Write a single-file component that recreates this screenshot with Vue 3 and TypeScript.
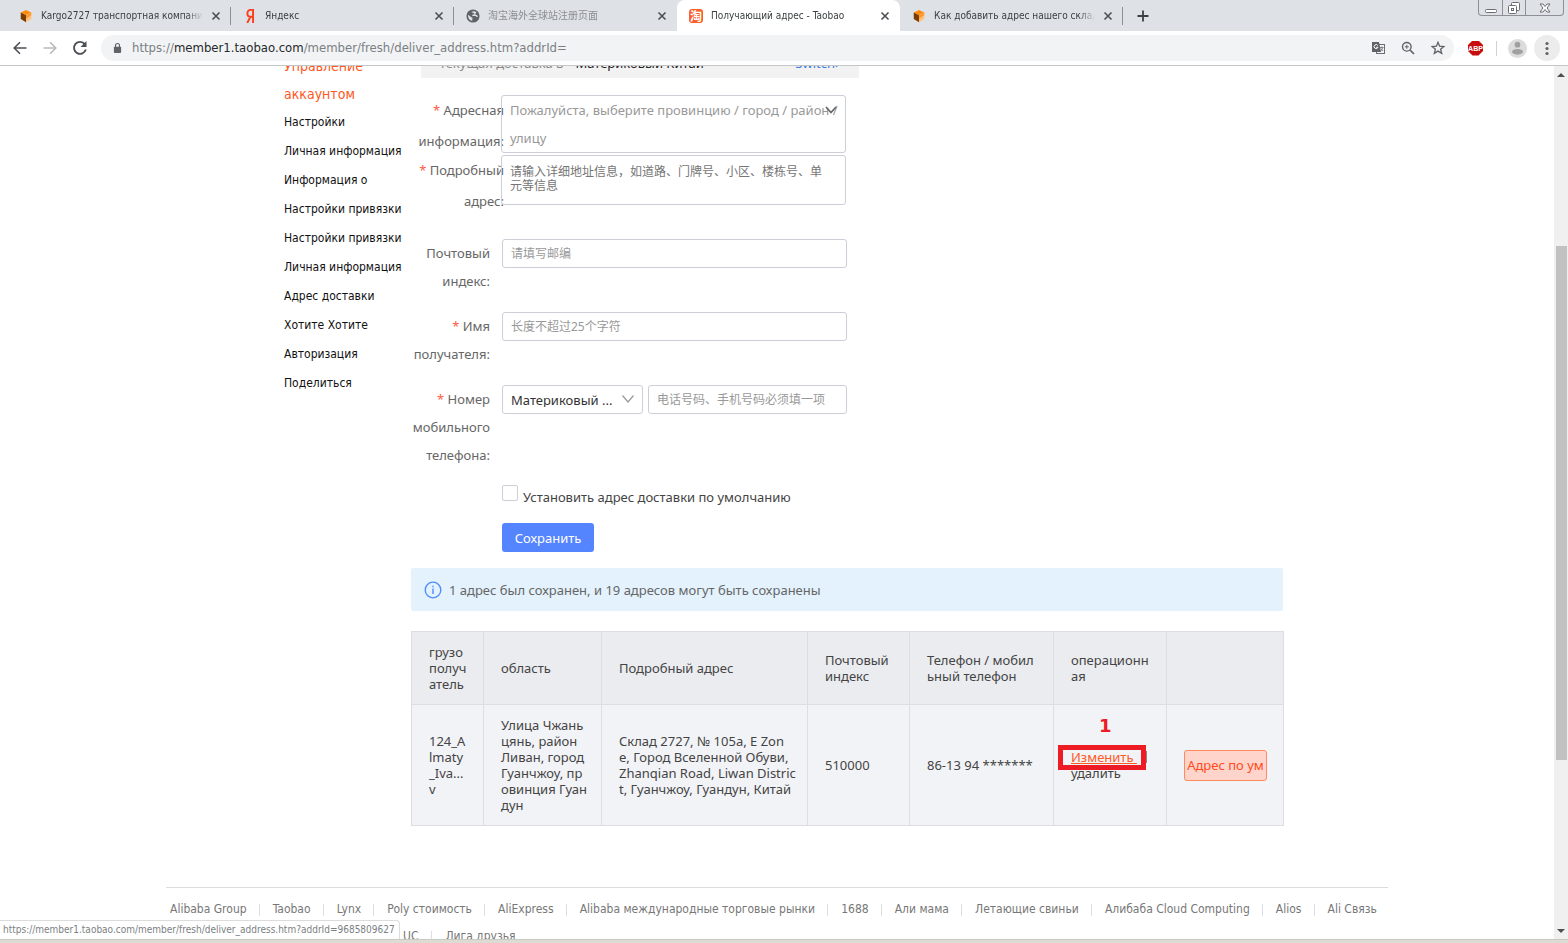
<script setup lang="ts">
import { ref } from 'vue'

interface Tab {
  title: string
  icon: 'box' | 'yandex' | 'globe' | 'taobao'
  active?: boolean
  muted?: boolean
}

const tabs: Tab[] = [
  { title: 'Kargo2727 транспортная компания', icon: 'box' },
  { title: 'Яндекс', icon: 'yandex' },
  { title: '淘宝海外全球站注册页面', icon: 'globe', muted: true },
  { title: 'Получающий адрес - Taobao', icon: 'taobao', active: true },
  { title: 'Как добавить адрес нашего склада', icon: 'box' },
]

const menu: string[] = [
  'Настройки',
  'Личная информация',
  'Информация о',
  'Настройки привязки',
  'Настройки привязки',
  'Личная информация',
  'Адрес доставки',
  'Хотите Хотите',
  'Авторизация',
  'Поделиться',
]

const columns: string[] = [
  'грузо\nполуч\nатель',
  'область',
  'Подробный адрес',
  'Почтовый\nиндекс',
  'Телефон / мобил\nьный телефон',
  'операционн\nая',
  '',
]

const cells: string[] = [
  '124_A\nlmaty\n_Iva...\nv',
  'Улица Чжань\nцянь, район\nЛиван, город\nГуанчжоу, пр\nовинция Гуан\nдун',
  'Склад 2727, № 105a, E Zon\ne, Город Вселенной Обуви,\nZhanqian Road, Liwan Distric\nt, Гуанчжоу, Гуандун, Китай',
  '510000',
  '86-13 94 *******',
]

const partners: string[] = [
  'Alibaba Group',
  'Taobao',
  'Lynx',
  'Poly стоимость',
  'AliExpress',
  'Alibaba международные торговые рынки',
  '1688',
  'Али мама',
  'Летающие свиньи',
  'Алибаба Cloud Computing',
  'Alios',
  'Ali Связь',
]
const morePartners: string[] = ['UC', 'Лига друзья']

const detail = ref('')
const zip = ref('')
const recipient = ref('')
const phone = ref('')
const region = ref('cn')
const isDefault = ref(false)
</script>

<template>
  <div class="browser">
    <header class="tabstrip">
      <div v-for="(tab, i) in tabs" :key="i" class="tab" :class="{ active: tab.active, muted: tab.muted, before: tabs[i + 1]?.active }">
        <svg v-if="tab.icon === 'box'" class="favicon" viewBox="0 0 16 16" aria-hidden="true">
          <path d="M8 1 14 4 8 7 2 4Z" fill="#ff8a0c" />
          <path d="M2 4 8 7V15L2 11.500Z" fill="#7a3d00" />
          <path d="M14 4 8 7V15L14 11.500Z" fill="#ffc27a" />
          <path d="M8 7 14 4V7L8 11Z" fill="#ff9a2b" />
        </svg>
        <svg v-else-if="tab.icon === 'yandex'" class="favicon" viewBox="0 0 16 16" aria-hidden="true">
          <path d="M11.500 16V1H9C6.400 1 5 2.700 5 5C5 7.400 6.500 8.900 9 8.900H11.500M8.600 8.900 4.800 16" fill="none" stroke="#fc3f1d" stroke-width="2.200" />
        </svg>
        <svg v-else-if="tab.icon === 'globe'" class="favicon" viewBox="0 0 16 16" aria-hidden="true">
          <circle cx="8" cy="8" r="7.500" fill="#5f6368" />
          <path d="M2.500 6.500 6 9.500 7.500 10 7 13.500C4 13 2 10 2.500 6.500ZM6 3 10 2.500 12 4 10 6 7 6.500 7.500 8H11L12.500 9.500 13.800 8" fill="#dee1e6" />
        </svg>
        <span v-else class="taobao" aria-hidden="true">淘</span>
        <span class="tab-title">{{ tab.title }}</span>
        <button class="tab-close" type="button" aria-label="Закрыть вкладку">
          <svg viewBox="0 0 10 10"><path d="M1.500 1.500 8.500 8.500M8.500 1.500 1.500 8.500" stroke="#4c4f54" stroke-width="1.600" /></svg>
        </button>
      </div>
      <button class="new-tab" type="button" aria-label="Новая вкладка">
        <svg viewBox="0 0 12 12"><path d="M6 0.500V11.500M0.500 6H11.500" stroke="#3c4043" stroke-width="1.800" /></svg>
      </button>
      <div class="window-controls">
        <button type="button" aria-label="Свернуть">
          <svg viewBox="0 0 14 14"><rect x="1.500" y="8.500" width="11" height="3" rx="1" fill="#fff" stroke="#6a6e73" /></svg>
        </button>
        <button type="button" aria-label="Развернуть">
          <svg viewBox="0 0 14 14" fill="#fff" stroke="#6a6e73"><rect x="4.500" y="1.500" width="8" height="8" rx="1" /><rect x="1.500" y="4.500" width="8" height="8" rx="1" /><rect x="4.500" y="7.500" width="2" height="2" /></svg>
        </button>
        <button class="wide" type="button" aria-label="Закрыть">
          <svg viewBox="0 0 14 14"><path d="M2 3H5L7 5.500 9 3H12L9 7 12 11H9L7 8.500 5 11H2L5 7Z" fill="#fff" stroke="#6a6e73" /></svg>
        </button>
      </div>
    </header>

    <div class="toolbar">
      <button class="nav" type="button" aria-label="Назад">
        <svg viewBox="0 0 16 16"><path d="M14.500 8H2.500M8 2.200 2.200 8 8 13.800" fill="none" stroke="#4c5055" stroke-width="1.600" /></svg>
      </button>
      <button class="nav" type="button" aria-label="Вперёд">
        <svg viewBox="0 0 16 16"><path d="M1.500 8H13.500M8 2.200 13.800 8 8 13.800" fill="none" stroke="#b9bbbe" stroke-width="1.600" /></svg>
      </button>
      <button class="nav" type="button" aria-label="Обновить">
        <svg viewBox="0 0 16 16"><path d="M12.800 4.200A6 6 0 1 0 13.800 9.500" fill="none" stroke="#4c5055" stroke-width="1.900" /><path d="M14.500 1V7H8.500Z" fill="#4c5055" /></svg>
      </button>
      <div class="omnibox">
        <svg class="lock" viewBox="0 0 10 12" aria-hidden="true"><rect x="1" y="4.500" width="8" height="7" rx="1" fill="#5f6368" /><path d="M2.800 5V3.200A2.200 2.200 0 0 1 7.200 3.200V5" fill="none" stroke="#5f6368" stroke-width="1.300" /></svg>
        <span class="url">https://<b>member1.taobao.com</b>/member/fresh/deliver_address.htm?addrId=</span>
        <button type="button" aria-label="Перевести">
          <svg viewBox="0 0 14 14"><rect x="5.500" y="3.500" width="8" height="9" fill="#f1f3f4" stroke="#6b6f74" /><path d="M1 1H8L10 11H1Z" fill="#5f6368" /><path d="M6.800 4.500A2 2 0 1 0 7 6.300H5.200" fill="none" stroke="#fff" /><path d="M9 6.500H12.500M10.800 5.500V6.500M12 6.500 9.800 10M10 7.500 12 10" fill="none" stroke="#6b6f74" stroke-width=".8" /></svg>
        </button>
        <button type="button" aria-label="Масштаб">
          <svg viewBox="0 0 14 14" fill="none" stroke="#5f6368"><circle cx="5.800" cy="5.800" r="4.300" stroke-width="1.400" /><path d="M9 9 13 13" stroke-width="1.700" /><path d="M5.800 3.800V7.800M3.800 5.800H7.800" /></svg>
        </button>
        <button type="button" aria-label="Добавить в закладки">
          <svg viewBox="0 0 14 14"><path d="M7 1.300 8.600 5.200 12.900 5.500 9.600 8.200 10.700 12.400 7 10.100 3.300 12.400 4.400 8.200 1.100 5.500 5.400 5.200Z" fill="none" stroke="#5f6368" stroke-width="1.300" /></svg>
        </button>
      </div>
      <button class="abp" type="button">ABP</button>
      <span class="tool-sep"></span>
      <button class="round" type="button" aria-label="Профиль">
        <svg viewBox="0 0 20 20"><circle cx="10" cy="10" r="10" fill="#dcdcdc" /><circle cx="10" cy="6" r="3" fill="#a0a0a0" /><ellipse cx="10" cy="13.500" rx="5.800" ry="3" fill="#a0a0a0" /></svg>
      </button>
      <button class="round menu-btn" type="button" aria-label="Меню">
        <svg viewBox="0 0 26 26"><circle cx="13" cy="13" r="13" fill="#ececec" /><g fill="#5f6368"><circle cx="13" cy="8.500" r="1.600" /><circle cx="13" cy="13.500" r="1.600" /><circle cx="13" cy="18.500" r="1.600" /></g></svg>
      </button>
    </div>

    <div class="viewport">
      <div class="page">
        <div class="content">
          <nav class="sidebar">
            <h2>Управление аккаунтом</h2>
            <ul>
              <li v-for="(item, i) in menu" :key="i"><a href="#">{{ item }}</a></li>
            </ul>
          </nav>

          <main>
            <div class="delivery">
              <span>Текущая доставка в</span>
              <strong>Материковый Китай</strong>
              <a href="#">Switch&rsaquo;</a>
            </div>

            <form @submit.prevent>
              <div class="row tight">
                <label for="area"><i>*</i> Адресная информация:</label>
                <button id="area" class="field area" type="button" aria-haspopup="listbox">
                  <span>Пожалуйста, выберите провинцию / город / район&nbsp;/<br />улицу</span>
                  <svg viewBox="0 0 12 8" aria-hidden="true"><path d="M1 1 6 6.500 11 1" fill="none" stroke="#666" stroke-width="1.700" /></svg>
                </button>
              </div>
              <div class="row tight second">
                <label for="detail"><i>*</i> Подробный адрес:</label>
                <textarea id="detail" v-model="detail" class="field" placeholder="请输入详细地址信息，如道路、门牌号、小区、楼栋号、单元等信息"></textarea>
              </div>
              <div class="row">
                <label for="zip">Почтовый индекс:</label>
                <input id="zip" v-model="zip" class="field" type="text" placeholder="请填写邮编" />
              </div>
              <div class="row">
                <label for="recipient"><i>*</i> Имя получателя:</label>
                <input id="recipient" v-model="recipient" class="field" type="text" placeholder="长度不超过25个字符" />
              </div>
              <div class="row">
                <label for="phone"><i>*</i> Номер мобильного телефона:</label>
                <div class="pair">
                  <div class="select">
                    <select v-model="region" class="field" aria-label="Код региона">
                      <option value="cn">Материковый ...</option>
                    </select>
                    <svg viewBox="0 0 12 8" aria-hidden="true"><path d="M0.500 0.500 6 7 11.500 0.500" fill="none" stroke="#999" stroke-width="1.200" /></svg>
                  </div>
                  <input id="phone" v-model="phone" class="field" type="tel" placeholder="电话号码、手机号码必须填一项" />
                </div>
              </div>
              <div class="actions">
                <div class="check">
                  <input id="default" v-model="isDefault" type="checkbox" />
                  <label for="default">Установить адрес доставки по умолчанию</label>
                </div>
                <button class="save" type="submit">Сохранить</button>
              </div>
            </form>

            <p class="notice">
              <svg viewBox="0 0 18 18" aria-hidden="true"><circle cx="9" cy="9" r="7.800" fill="none" stroke="#4e8bff" stroke-width="1.300" /><path d="M9 7.500V13M9 4.800V6.200" stroke="#4e8bff" stroke-width="1.400" /></svg>
              1 адрес был сохранен, и 19 адресов могут быть сохранены
            </p>

            <table>
              <colgroup>
                <col class="c1" /><col class="c2" /><col class="c3" /><col class="c4" /><col class="c5" /><col class="c6" /><col class="c7" />
              </colgroup>
              <thead>
                <tr><th v-for="(name, i) in columns" :key="i" scope="col">{{ name }}</th></tr>
              </thead>
              <tbody>
                <tr>
                  <td v-for="(cell, i) in cells" :key="i">{{ cell }}</td>
                  <td>
                    <div class="ops">
                      <a class="edit" href="#">Изменить&nbsp;</a><span class="bar"></span>
                      <a class="remove" href="#">удалить</a>
                      <span class="mark"></span>
                      <b class="step">1</b>
                    </div>
                  </td>
                  <td class="last"><button class="default-btn" type="button">Адрес по ум</button></td>
                </tr>
              </tbody>
            </table>
          </main>
        </div>

        <footer>
          <ul>
            <li v-for="name in partners" :key="name"><a href="#">{{ name }}</a></li>
          </ul>
          <ul class="more">
            <li v-for="name in morePartners" :key="name"><a href="#">{{ name }}</a></li>
          </ul>
        </footer>
      </div>

      <div class="scrollbar" aria-hidden="true">
        <svg viewBox="0 0 14 14"><path d="M3 9 7 5 11 9Z" fill="#505050" /></svg>
        <span class="gap"></span>
        <span class="thumb"></span>
        <span class="gap"></span>
        <svg viewBox="0 0 14 14"><path d="M3 5 7 9 11 5Z" fill="#505050" /></svg>
      </div>
      <div class="status">https://member1.taobao.com/member/fresh/deliver_address.htm?addrId=9685809627</div>
    </div>
    <div class="window-edge"></div>
  </div>
</template>

<style>
html,
body {
  margin: 0;
  overflow: hidden;
  background: #fff;
}
</style>

<style scoped>
.browser {
  display: flex;
  flex-direction: column;
  height: 100vh;
  font: 13px/16px "Noto Sans", "Noto Sans CJK SC", sans-serif;
  color: #444;
}
* {
  box-sizing: border-box;
}
button {
  border: 0;
  padding: 0;
  background: none;
  font: inherit;
  color: inherit;
}
a {
  color: inherit;
  text-decoration: none;
}
svg {
  display: block;
}
ul {
  list-style: none;
  margin: 0;
  padding: 0;
}

/* tabs */
.tabstrip {
  display: flex;
  flex: none;
  height: 31px;
  background: #dee1e6;
  font: 10px/16px "DejaVu Sans Condensed", "Noto Sans CJK SC", sans-serif;
  color: #3c4043;
}
.tab {
  display: flex;
  flex: 0 1 223px;
  align-items: center;
  min-width: 0;
  padding: 0 10px 0 12px;
  position: relative;
}
.tab:first-child {
  flex-basis: 231px;
  padding-left: 19px;
}
.tab::after {
  content: "";
  position: absolute;
  right: 0;
  top: 7px;
  bottom: 6px;
  width: 1px;
  background: #8d9095;
}
.tab.active {
  background: #fff;
  border-radius: 8px 8px 0 0;
}
.tab.active::after,
.tab.before::after {
  display: none;
}
.tab.muted {
  color: #8b8e93;
}
.favicon {
  flex: none;
  width: 14px;
  height: 14px;
}
.taobao {
  flex: none;
  width: 14px;
  height: 14px;
  border-radius: 3px;
  background: #f9602c;
  color: #fff;
  font: bold 12px/14px "Noto Sans CJK SC", sans-serif;
  text-align: center;
}
.tab-title {
  flex: 1;
  min-width: 0;
  margin: 0 8px;
  overflow: hidden;
  white-space: nowrap;
  mask-image: linear-gradient(to right, #000 calc(100% - 16px), transparent);
}
.tab-close svg {
  width: 10px;
  height: 10px;
}
.new-tab {
  width: 40px;
  display: flex;
  align-items: center;
  justify-content: center;
}
.new-tab svg {
  width: 12px;
  height: 12px;
}
.window-controls {
  display: flex;
  margin-left: auto;
  margin-right: 4px;
  height: 16px;
  border: 1px solid #8d9197;
  border-top: 0;
  border-radius: 0 0 4px 4px;
}
.window-controls button {
  display: flex;
  align-items: center;
  justify-content: center;
  width: 23px;
}
.window-controls button.wide {
  width: 38px;
}
.window-controls button + button {
  border-left: 1px solid #8d9197;
}
.window-controls svg {
  width: 14px;
  height: 14px;
}

/* toolbar */
.toolbar {
  display: flex;
  flex: none;
  align-items: center;
  height: 35px;
  padding: 0 8px 0 12px;
  background: #fff;
  border-bottom: 1px solid #c4c5c7;
}
.nav {
  width: 16px;
  margin-right: 14px;
}
.nav svg {
  width: 16px;
  height: 16px;
}
.omnibox {
  display: flex;
  flex: 1;
  align-items: center;
  gap: 16px;
  height: 26px;
  margin: 0 14px 0 -1px;
  padding: 0 9px 0 12px;
  border-radius: 13px;
  background: #f1f3f4;
}
.lock {
  width: 9px;
  height: 12px;
}
.url {
  flex: 1;
  margin-left: -6px;
  font: 13px/18px "DejaVu Sans Condensed", sans-serif;
  color: #7b7f84;
}
.url b {
  font-weight: normal;
  color: #27292c;
}
.omnibox svg:not(.lock) {
  width: 14px;
  height: 14px;
}
.abp {
  width: 15px;
  height: 15px;
  clip-path: polygon(30% 0, 70% 0, 100% 30%, 100% 70%, 70% 100%, 30% 100%, 0 70%, 0 30%);
  background: #c70d0d;
  color: #fff;
  font: bold 7px/15px "Liberation Sans", sans-serif;
  text-align: center;
}
.tool-sep {
  width: 1px;
  height: 15px;
  margin: 0 11px 0 13px;
  background: #cfd1d4;
}
.round svg {
  width: 19px;
  height: 19px;
}
.menu-btn {
  margin-left: 7px;
}
.menu-btn svg {
  width: 26px;
  height: 26px;
}

/* page */
.viewport {
  display: flex;
  flex: 1;
  min-height: 0;
  overflow: hidden;
  position: relative;
}
.page {
  flex: 1;
  min-width: 0;
}
.content {
  display: grid;
  grid-template-columns: 127px minmax(0, 1fr);
  max-width: 1222px;
  margin: -14px auto 0;
  padding: 0 105px 0 118px;
}
.sidebar {
  font: 12px/29px "DejaVu Sans Condensed", sans-serif;
  color: #111;
}
.sidebar h2 {
  margin: 0;
  width: 100px;
  font-size: 14px;
  font-weight: normal;
  line-height: 28px;
  color: #ff5722;
}
.sidebar li {
  white-space: nowrap;
}
.delivery {
  display: flex;
  width: 438px;
  height: 26px;
  margin-left: 10px;
  padding: 3px 20px 0 18px;
  background: #f2f2f2;
  color: #8a8a8a;
}
.delivery strong {
  margin-left: 12px;
  font-weight: normal;
  color: #222;
}
.delivery a {
  margin-left: auto;
  color: #3d7be0;
}

/* form */
form {
  margin-top: 17px;
}
.row {
  display: grid;
  grid-template-columns: 79px 345px;
  column-gap: 12px;
  min-height: 73px;
}
.row label {
  color: #666;
  line-height: 28px;
  text-align: right;
}
.row label i {
  font-style: normal;
  color: #ff5a43;
}
.row.tight {
  grid-template-columns: 93px 345px;
  column-gap: 0;
  height: 60px;
  min-height: 0;
}
.row.tight > .field {
  margin-left: -3px;
  width: 345px;
}
.row.tight label {
  line-height: 31px;
}
.row.tight.second {
  height: 84px;
}
.field {
  width: 100%;
  height: 29px;
  padding: 0 8px;
  border: 1px solid #cdced8;
  border-radius: 3px;
  background: transparent;
  color: #333;
  font: 12px/14px "Noto Sans", "Noto Sans CJK SC", sans-serif;
}
.field::placeholder {
  color: #999;
  opacity: 1;
}
.area {
  position: relative;
  height: 58px;
  padding: 0 0 0 8px;
  text-align: left;
  white-space: nowrap;
  color: #999;
  font-size: 13px;
  line-height: 28px;
}
.area svg {
  position: absolute;
  right: 8px;
  top: 10px;
  width: 12px;
  height: 8px;
}
textarea.field {
  display: block;
  height: 50px;
  padding: 9px 15px 0 8px;
  resize: none;
  overflow: hidden;
}
textarea.field::placeholder {
  color: #757575;
}
.pair {
  display: grid;
  grid-template-columns: 141px 1fr;
  gap: 5px;
}
.select {
  position: relative;
}
.select select {
  appearance: none;
  font-size: 13px;
}
.select svg {
  position: absolute;
  right: 9px;
  top: 10px;
  width: 12px;
  height: 8px;
}
.actions {
  margin: 16px 0 0 91px;
}
.check {
  display: flex;
  gap: 5px;
  line-height: 24px;
}
.check input {
  appearance: none;
  flex: none;
  width: 16px;
  height: 16px;
  margin: 0;
  border: 1px solid #cdced8;
  border-radius: 2px;
}
.save {
  display: block;
  margin-top: 14px;
  width: 92px;
  height: 29px;
  border-radius: 3px;
  background: #5584ff;
  color: #fff;
}
.notice {
  display: flex;
  align-items: center;
  gap: 7px;
  height: 43px;
  margin: 16px 0 20px;
  padding: 0 13px;
  border-radius: 2px;
  background: #e3f2fd;
  color: #666;
}
.notice svg {
  width: 18px;
  height: 18px;
}

/* table */
table {
  width: 100%;
  table-layout: fixed;
  border-collapse: collapse;
}
.c1 { width: 72px; }
.c2 { width: 118px; }
.c3 { width: 206px; }
.c4 { width: 102px; }
.c5 { width: 144px; }
.c6 { width: 113px; }
.c7 { width: 117px; }
th,
td {
  padding: 0 0 0 17px;
  border: 1px solid #dcdee3;
  text-align: left;
  white-space: pre;
}
th {
  height: 73px;
  background: #ebecf0;
  font-weight: normal;
}
td {
  height: 121px;
  background: #f2f3f7;
}
.ops {
  position: relative;
  display: flex;
  flex-direction: column;
  align-items: flex-start;
  white-space: normal;
}
.edit {
  color: #ff5a1f;
  text-decoration: underline;
}
.bar {
  position: absolute;
  left: 75px;
  top: 2px;
  width: 1px;
  height: 12px;
  background: #888;
}
.mark {
  position: absolute;
  left: -13px;
  top: -4px;
  width: 88px;
  height: 25px;
  border: 5px solid #ed1c24;
}
.step {
  position: absolute;
  left: 28px;
  top: -33px;
  font: bold 18px/20px "DejaVu Sans", sans-serif;
  color: #ed1c24;
}
.default-btn {
  width: 83px;
  height: 31px;
  border: 1px solid #ff8a5c;
  border-radius: 3px;
  background: #ffd5cb;
  color: #ff4a1c;
  overflow: hidden;
}

/* footer */
footer {
  max-width: 1222px;
  margin: 61px auto 0;
  padding: 8px 11px 0 4px;
  border-top: 1px solid #dcdcdc;
  font: 12px/27px "DejaVu Sans Condensed", sans-serif;
  color: #777;
}
footer ul {
  display: flex;
  justify-content: space-between;
  white-space: nowrap;
}
footer li {
  display: flex;
  align-items: center;
}
footer li + li::before {
  content: "";
  width: 1px;
  height: 12px;
  margin-right: 13px;
  background: #dddde4;
}
footer .more {
  justify-content: flex-start;
  gap: 13px;
  padding-left: 233px;
}

.scrollbar {
  display: flex;
  flex: none;
  flex-direction: column;
  align-items: center;
  width: 14px;
  padding: 2px 0 1px;
  background: #f0f0f0;
}
.scrollbar svg {
  flex: none;
  width: 14px;
  height: 14px;
}
.gap {
  flex: 164;
}
.thumb {
  flex: 513;
  width: 11px;
  background: #c1c1c1;
}
.status {
  position: absolute;
  left: 0;
  bottom: 0;
  padding: 0 4px 0 3px;
  border: 1px solid #dcdcdc;
  border-width: 1px 1px 0 0;
  border-radius: 0 4px 0 0;
  background: #fff;
  font: 10px/18px "DejaVu Sans Condensed", sans-serif;
  color: #7b7f84;
}
.window-edge {
  flex: none;
  height: 4px;
  border-top: 1px solid #c9c9c4;
  background: #dcdcd2;
}
</style>
